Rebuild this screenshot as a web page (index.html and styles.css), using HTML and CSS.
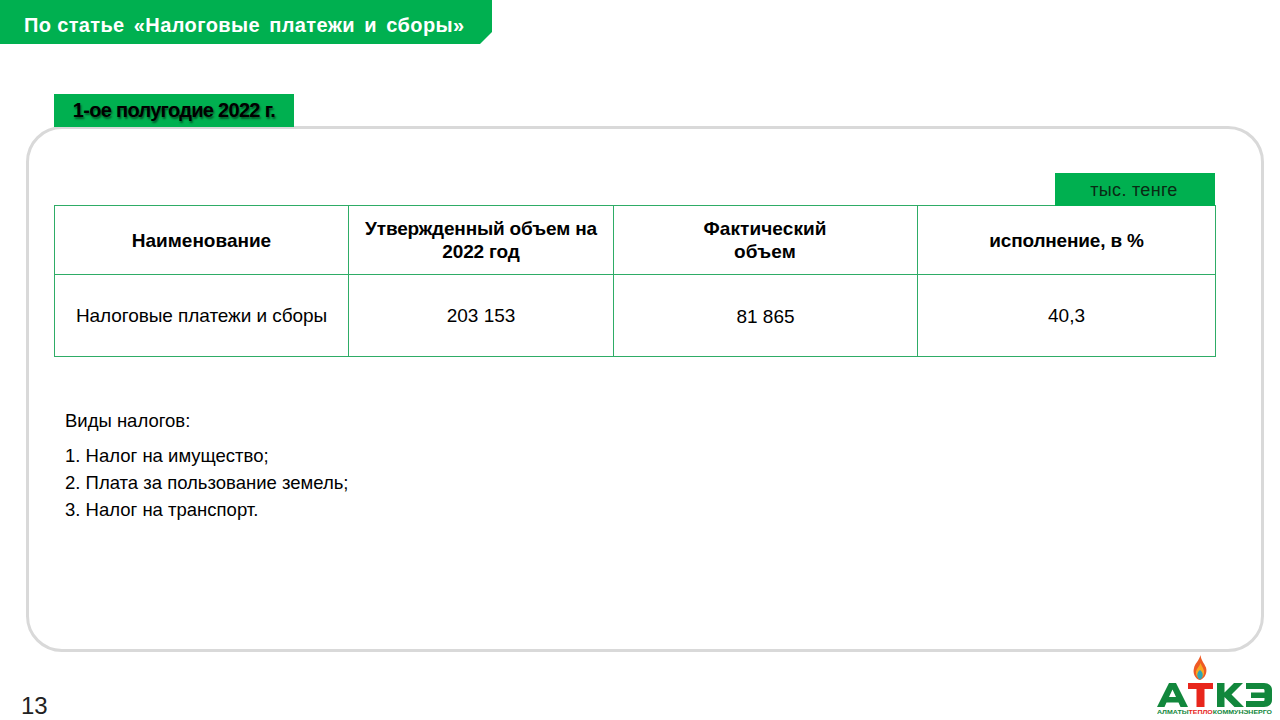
FILE: index.html
```html
<!DOCTYPE html>
<html lang="ru">
<head>
<meta charset="utf-8">
<title>По статье «Налоговые платежи и сборы»</title>
<link rel="stylesheet" href="styles.css">
</head>
<body>
<div class="slide">
  <header class="title-bar"><h1><span class="lead">По статье</span> «Налоговые платежи и сборы»</h1></header>
  <div class="period-tab">1-ое полугодие 2022 г.</div>
  <main class="card">
    <div class="unit-row"><div class="unit">тыс. тенге</div></div>
    <table class="data">
      <colgroup><col class="c1"><col class="c2"><col class="c3"><col class="c4"></colgroup>
      <thead>
        <tr>
          <th>Наименование</th>
          <th><span class="tight">Утвержденный объем на<br>2022 год</span></th>
          <th class="shift-left">Фактический<br>объем</th>
          <th><span class="tight">исполнение, в %</span></th>
        </tr>
      </thead>
      <tbody>
        <tr>
          <td><span class="tight-s">Налоговые платежи и сборы</span></td>
          <td>203 153</td>
          <td class="fact">81 865</td>
          <td>40,3</td>
        </tr>
      </tbody>
    </table>
    <section class="notes">
      <p class="notes-head">Виды налогов:</p>
      <ol class="notes-list">
        <li>Налог на имущество;</li>
        <li>Плата за пользование земель;</li>
        <li>Налог на транспорт.</li>
      </ol>
    </section>
  </main>
  <footer class="footer">
    <span class="page-no">13</span>
    <svg class="logo" viewBox="0 0 116 62" width="116" height="62" role="img" aria-label="АТКЭ">
      <path d="M43.500 1c.5 5 3.500 8 5.500 12.500 1.500 5-1 11-6 12.500-5-1-7.500-7-6-12 1-5 5-7 6.500-13z" fill="#ef5a24"/>
      <path d="M43.500 9c1 3 3 5 3.500 8 .5 4-1.500 7-4 8-2.500-1-4.500-4-4-7.500.5-3 3.500-5 4.500-8.500z" fill="#f7a823"/>
      <path d="M43 16c1.500 1 3 3 2.700 5.500-.3 2-1.500 3.700-2.700 4-1.200-.3-2.400-2-2.700-4-.3-2.500 1.200-4.500 2.700-5.500z" fill="#2fa6b8"/>
      <path d="M0 53 12 29h7l12 24h-7.500l-2-4.500H9.500L7.500 53zM12 43h7l-3.500-7.500z" fill="#12873c"/>
      <path d="M31 29h25v6h-8.500v18h-8V35H31z" fill="#e8261c"/>
      <path d="M60 29h7.500v9.500L77 29h9L74.500 40.500 87 53h-9.500l-10-10v10H60z" fill="#12873c"/>
      <path d="M89 29h18c5 0 8 3 8 7v10c0 4-3 7-8 7H89v-6h17c1 0 1.500-.5 1.500-1.500V44H94v-5.500h13.500v-2c0-1-.5-1.500-1.500-1.500H89z" fill="#12873c"/>
      <text x="0" y="60" class="logo-sub" textLength="115" lengthAdjust="spacingAndGlyphs">АЛМАТЫ<tspan class="logo-red">ТЕПЛО</tspan>КОММУНЭНЕРГО</text>
    </svg>
  </footer>
</div>
</body>
</html>
```
FILE: styles.css
```css
* { box-sizing: border-box; }
html, body { margin: 0; padding: 0; }
body { background: #fff; font-family: "Liberation Sans", Arial, sans-serif; color: #000; }
.slide { width: 1280px; height: 720px; overflow: hidden; display: flex; flex-direction: column; }

.title-bar {
  width: 492px; height: 44px; flex: none;
  background: #00b050;
  clip-path: polygon(0 0, 100% 0, 100% 32px, 480px 100%, 0 100%);
  display: flex; align-items: center; padding: 6px 0 0 24px;
}
.title-bar h1 { margin: 0; color: #fff; font-size: 20px; font-weight: 700; letter-spacing: .4px; word-spacing: 3.3px; white-space: nowrap; }
.lead { letter-spacing: .35px; word-spacing: 0; }

.period-tab {
  position: relative; z-index: 1; flex: none;
  width: 240px; height: 33px; margin: 50px 0 0 54px;
  background: #00b050;
  display: flex; align-items: center; justify-content: center;
  font-size: 20px; font-weight: 700; letter-spacing: -.7px; white-space: nowrap;
  text-shadow: 1px 2px 2px rgba(0,0,0,.5);
}

.card {
  flex: none;
  width: 1238px; height: 526px; margin: -1px 0 0 26px;
  border: 3px solid #d9d9d9; border-radius: 36px;
  padding: 44px 0 0 25px;
}
.unit-row { width: 1161px; display: flex; justify-content: flex-end; }
.unit {
  width: 160px; height: 33px; background: #00b050;
  display: flex; align-items: center; justify-content: center;
  font-size: 18px; color: #0a2a14; letter-spacing: .3px; padding: 1px 2px 0 0;
}

.data {
  width: 1161px; table-layout: fixed; border-collapse: collapse;
  margin: -1px 0 0;
}
.c1 { width: 294px; } .c2 { width: 265px; } .c3 { width: 304px; } .c4 { width: 298px; }
.data th, .data td { border: 1px solid #2eac66; text-align: center; vertical-align: middle; padding: 0; }
.data th { height: 69px; font-size: 19px; line-height: 23px; font-weight: 700; }
.data td { height: 82px; font-size: 19px; }
.tight { letter-spacing: -.17px; }
.tight-s { letter-spacing: -.07px; }
.data th.shift-left { padding-right: 1px; letter-spacing: .1px; }
.data td.fact { padding-top: 2px; }

.notes { margin: 53px 0 0 11px; font-size: 18.500px; }
.notes-head { margin: 0 0 10px; line-height: 22px; }
.notes-list { margin: 0; padding: 0; list-style: none; counter-reset: n; }
.notes-list li { counter-increment: n; line-height: 27px; }
.notes-list li::before { content: counter(n) ". "; }

.footer { flex: 1; position: relative; }
.page-no { position: absolute; left: 21px; top: 40px; font-size: 24px; color: #222; line-height: 28px; }
.logo { position: absolute; left: 1157px; top: 2px; }
.logo-sub { font-family: "Liberation Sans", Arial, sans-serif; font-weight: 700; font-size: 5px; fill: #12873c; }
.logo-red { fill: #e8261c; }
```
